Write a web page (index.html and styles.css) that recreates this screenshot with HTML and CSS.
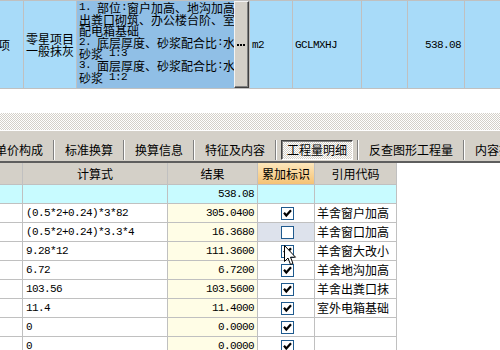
FILE: index.html
```html
<!DOCTYPE html>
<html>
<head>
<meta charset="utf-8">
<link rel="stylesheet" href="styles.css">
</head>
<body>
<div class="page">
  <div class="toprow">
    <div class="tc c1"><span class="cut">项</span></div>
    <div class="tc c2 center"><div class="twoline">零星项目<br>一般抹灰</div></div>
    <div class="desc">
      <div class="desctext">
        <div class="ln"><span class="a">1. </span>部位<span class="a">:</span>窗户加高、地沟加高、</div>
        <div class="ln">出粪口砌筑、办公楼台阶、室</div>
        <div class="ln">配电箱基础</div>
        <div class="ln"><span class="a">2. </span>底层厚度、砂浆配合比<span class="a">:</span>水泥</div>
        <div class="ln">砂浆<span class="a"> 1:3</span></div>
        <div class="ln"><span class="a">3. </span>面层厚度、砂浆配合比<span class="a">:</span>水泥</div>
        <div class="ln">砂浆<span class="a"> 1:2</span></div>
      </div>
      <div class="dotbtn"><svg width="8" height="2" viewBox="0 0 8 2"><rect x="0" y="0" width="2" height="2" fill="#000"/><rect x="3" y="0" width="2" height="2" fill="#000"/><rect x="6" y="0" width="2" height="2" fill="#000"/></svg></div>
    </div>
    <div class="tc c4 num pl">m2</div>
    <div class="tc c5 num pl">GCLMXHJ</div>
    <div class="tc c6"></div>
    <div class="tc c7 num right">538.08</div>
    <div class="tc c8 noborder"></div>
  </div>
  <div class="gap"></div>
  <div class="dither"></div>
  <div class="tabs">
    <div class="tab first">单价构成</div><div class="sep"></div>
    <div class="tab">标准换算</div><div class="sep"></div>
    <div class="tab">换算信息</div><div class="sep"></div>
    <div class="tab">特征及内容</div><div class="sep"></div>
    <div class="tab active">工程量明细</div><div class="sep"></div>
    <div class="tab">反查图形工程量</div><div class="sep"></div>
    <div class="tab">内容指引</div>
  </div>
  <div class="grid">
    <div class="gr head">
      <div class="gc g0"></div>
      <div class="gc g1 center">计算式</div>
      <div class="gc g2 center">结果</div>
      <div class="gc g3 center flaghead">累加标识</div>
      <div class="gc g4 center">引用代码</div>
    </div>
    <div class="gr total">
      <div class="gc g0"></div>
      <div class="gc g1"></div>
      <div class="gc g2 num right">538.08</div>
      <div class="gc g3"></div>
      <div class="gc g4"></div>
    </div>
    <div class="gr">
      <div class="gc g0"></div>
      <div class="gc g1 num pl">(0.5*2+0.24)*3*82</div>
      <div class="gc g2 num right res">305.0400</div>
      <div class="gc g3 center"><span class="cb"><svg width="11" height="11" viewBox="0 0 11 11"><polyline points="2,4.8 4.3,7.5 9,2.2" fill="none" stroke="#000" stroke-width="2.2"/></svg></span></div>
      <div class="gc g4 pl">羊舍窗户加高</div>
    </div>
    <div class="gr">
      <div class="gc g0"></div>
      <div class="gc g1 num pl">(0.5*2+0.24)*3.3*4</div>
      <div class="gc g2 num right res">16.3680</div>
      <div class="gc g3 center sel"><span class="cb"></span></div>
      <div class="gc g4 pl">羊舍窗口加高</div>
    </div>
    <div class="gr">
      <div class="gc g0"></div>
      <div class="gc g1 num pl">9.28*12</div>
      <div class="gc g2 num right res">111.3600</div>
      <div class="gc g3 center"><span class="cb"><svg width="11" height="11" viewBox="0 0 11 11"><polyline points="2,4.8 4.3,7.5 9,2.2" fill="none" stroke="#000" stroke-width="2.2"/></svg></span></div>
      <div class="gc g4 pl">羊舍窗大改小</div>
    </div>
    <div class="gr">
      <div class="gc g0"></div>
      <div class="gc g1 num pl">6.72</div>
      <div class="gc g2 num right res">6.7200</div>
      <div class="gc g3 center"><span class="cb"><svg width="11" height="11" viewBox="0 0 11 11"><polyline points="2,4.8 4.3,7.5 9,2.2" fill="none" stroke="#000" stroke-width="2.2"/></svg></span></div>
      <div class="gc g4 pl">羊舍地沟加高</div>
    </div>
    <div class="gr">
      <div class="gc g0"></div>
      <div class="gc g1 num pl">103.56</div>
      <div class="gc g2 num right res">103.5600</div>
      <div class="gc g3 center"><span class="cb"><svg width="11" height="11" viewBox="0 0 11 11"><polyline points="2,4.8 4.3,7.5 9,2.2" fill="none" stroke="#000" stroke-width="2.2"/></svg></span></div>
      <div class="gc g4 pl">羊舍出粪口抹</div>
    </div>
    <div class="gr">
      <div class="gc g0"></div>
      <div class="gc g1 num pl">11.4</div>
      <div class="gc g2 num right res">11.4000</div>
      <div class="gc g3 center"><span class="cb"><svg width="11" height="11" viewBox="0 0 11 11"><polyline points="2,4.8 4.3,7.5 9,2.2" fill="none" stroke="#000" stroke-width="2.2"/></svg></span></div>
      <div class="gc g4 pl">室外电箱基础</div>
    </div>
    <div class="gr">
      <div class="gc g0"></div>
      <div class="gc g1 num pl">0</div>
      <div class="gc g2 num right res">0.0000</div>
      <div class="gc g3 center"><span class="cb"><svg width="11" height="11" viewBox="0 0 11 11"><polyline points="2,4.8 4.3,7.5 9,2.2" fill="none" stroke="#000" stroke-width="2.2"/></svg></span></div>
      <div class="gc g4 pl"></div>
    </div>
    <div class="gr">
      <div class="gc g0"></div>
      <div class="gc g1 num pl">0</div>
      <div class="gc g2 num right res">0.0000</div>
      <div class="gc g3 center"><span class="cb"><svg width="11" height="11" viewBox="0 0 11 11"><polyline points="2,4.8 4.3,7.5 9,2.2" fill="none" stroke="#000" stroke-width="2.2"/></svg></span></div>
      <div class="gc g4 pl"></div>
    </div>
  </div>
  <svg class="cursor" width="13" height="21" viewBox="0 0 13 21"><path d="M0.5 0.5 L0.5 16.5 L4 13 L6.5 19.5 L9 18.5 L6.5 12.2 L11.5 12.2 Z" fill="#fff" stroke="#000" stroke-width="1"/></svg>
</div>
</body>
</html>
```
FILE: styles.css
```css
html, body {
  margin: 0;
  padding: 0;
}
body {
  width: 500px;
  height: 350px;
  overflow: hidden;
  background: #fff;
  font-family: "Noto Sans CJK SC", "Noto Sans", sans-serif;
  font-size: 12px;
  color: #000;
}
.page {
  position: relative;
  width: 500px;
  height: 350px;
  overflow: hidden;
}
.num, .a {
  font-family: "Liberation Mono", "Noto Sans CJK SC", monospace;
  font-size: 11px;
  letter-spacing: -0.6px;
}
.center { justify-content: center; text-align: center; }
.right { justify-content: flex-end; text-align: right; padding-right: 3px; }
.pl { padding-left: 2px; }

/* top row */
.toprow {
  display: flex;
  height: 89px;
  box-sizing: border-box;
  border-top: 1px solid #c0c0c0;
  border-bottom: 1px solid #c0c0c0;
  background: #a8dbf9;
}
.tc {
  flex: none;
  box-sizing: border-box;
  border-right: 1px solid #c0c0c0;
  display: flex;
  align-items: center;
  overflow: hidden;
  white-space: nowrap;
  line-height: 12px;
}
.tc.noborder { border-right: none; flex: 1; }
.c1 { width: 24px; }
.cut { margin-left: -2px; }
.c2 { width: 53px; }
.twoline { line-height: 12px; padding-top: 1px; }
.c4 { width: 43px; }
.c5 { width: 69px; }
.c6 { width: 46px; }
.c7 { width: 57px; }
.desc {
  flex: none;
  width: 173px;
  box-sizing: border-box;
  border-right: 1px solid #c0c0c0;
  background: #90bfe6;
  display: flex;
}
.desctext {
  flex: 1;
  min-width: 0;
  overflow: hidden;
  white-space: nowrap;
  padding: 1px 0 0 2px;
}
.ln {
  height: 11.6px;
  line-height: 11.6px;
}
.ln .a { line-height: 11.6px; vertical-align: top; }
.dotbtn {
  flex: none;
  width: 15px;
  box-sizing: border-box;
  background: #d4d0c8;
  border-left: 1px solid #f4f4f4;
  border-top: 1px solid #f4f4f4;
  border-right: 1px solid #404040;
  border-bottom: 1px solid #404040;
  box-shadow: inset -1px -1px 0 #808080;
  display: flex;
  align-items: center;
  justify-content: center;
  padding-right: 1px;
}

.gap { height: 24px; }
.dither {
  height: 17px;
  background-color: #fff;
  background-image: repeating-conic-gradient(#d4d0c8 0 25%, #fff 0 50%);
  background-size: 2px 2px;
}

/* tabs */
.tabs {
  display: flex;
  height: 33px;
  box-sizing: border-box;
  border-top: 1px solid #fff;
  border-bottom: 2px solid #5e5e5e;
  background: #d4d0c8;
  padding-top: 9px;
  overflow: hidden;
  white-space: nowrap;
}
.tab {
  flex: none;
  height: 20px;
  line-height: 20px;
  padding: 0 10px;
}
.tab.first { margin-left: -15px; }
.tab.active {
  box-sizing: border-box;
  padding: 0 5px;
  margin: 0 4px;
  line-height: 18px;
  border: 1px solid;
  border-color: #404040 #fff #fff #404040;
  box-shadow: inset 1px 1px 0 #808080;
  background-color: #fff;
  background-image: repeating-conic-gradient(#d4d0c8 0 25%, #fff 0 50%);
  background-size: 2px 2px;
}
.sep {
  flex: none;
  width: 2px;
  height: 20px;
  box-sizing: border-box;
  border-left: 1px solid #808080;
  border-right: 1px solid #fff;
}

/* grid */
.gr {
  display: flex;
  height: 19px;
}
.gr.head { height: 22px; }
.gc {
  flex: none;
  box-sizing: border-box;
  border-right: 1px solid #c0c0c0;
  border-bottom: 1px solid #c0c0c0;
  display: flex;
  align-items: center;
  overflow: hidden;
  white-space: nowrap;
  line-height: 18px;
}
.g0 { width: 23px; }
.g1 { width: 145px; }
.g2 { width: 90px; }
.g3 { width: 57px; }
.g4 { width: 82px; }
.head .gc { background: #d4d0c8; }
.head .flaghead { background: linear-gradient(#fde7bb, #f5c274); }
.total .gc { background: #c8fbff; }
.res { background: #fffde6; }
.sel { background: #dde2ec; }
.g1.pl { padding-left: 3px; }
.g4.pl { padding-left: 2px; }
.cb {
  display: block;
  width: 13px;
  height: 13px;
  box-sizing: border-box;
  border: 1px solid #1f5a8e;
  background: #fff;
  margin-left: 2px;
}
.cb svg { display: block; }

.cursor {
  position: absolute;
  left: 284px;
  top: 245px;
}
```
